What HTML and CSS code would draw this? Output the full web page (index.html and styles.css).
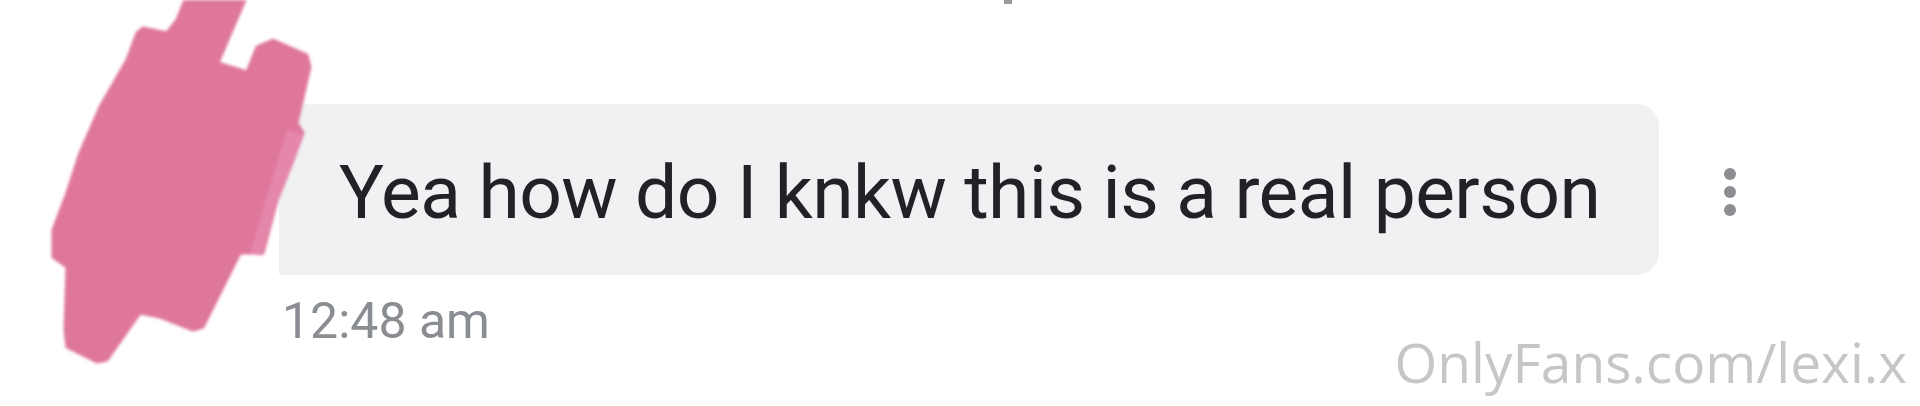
FILE: index.html
```html
<!DOCTYPE html>
<html>
<head>
<meta http-equiv="Content-Type" content="text/html; charset=utf-8">
<title>Message</title>
<link rel="stylesheet" href="styles.css">
</head>
<body>

<div class="chat">
  <span class="chat__cut" aria-hidden="true"></span>

  <svg class="scribble" width="330" height="380" viewBox="0 0 330 380" aria-hidden="true">
    <polygon class="scribble__main" points="185,0 245,0 218,63 247,72 257,47 273,40 307,55 310,67 297,123 303,133 293,160 277,200 263,253 240,253 203,327 193,330 160,317 140,313 107,360 97,362 67,347 65,330 67,267 53,257 53,230 67,193 80,153 100,107 127,60 137,33 143,28 167,33 177,20" />
    <polygon class="scribble__light" points="287,130 303,134 293,160 277,200 262,256 250,254 266,200" />
  </svg>

  <div class="message">
    <div class="message__row">
      <p class="message__bubble">Yea how do I knkw this is a real person</p>
      <button class="message__more" type="button" aria-label="More">
        <i></i><i></i><i></i>
      </button>
    </div>
    <p class="message__time">12:48 am</p>
  </div>

  <p class="watermark">OnlyFans.com/lexi.x</p>
</div>

</body>
</html>
```

FILE: styles.css
```css
/* reset */
body,div,p,button{margin:0;padding:0}
button{border:0;background:none;font:inherit}

/* page */
html,body{background:#fff;font-family:Roboto,"Liberation Sans",sans-serif;}
body{inline-size:1920px;block-size:406px;overflow:hidden;}

.chat{position:relative;inline-size:100%;block-size:100%;padding:104px 0 0 279px;box-sizing:border-box;}

/* message */
.message__row{display:flex;align-items:center;gap:65px;}
.message__bubble{inline-size:1380px;block-size:171px;box-sizing:border-box;padding:6px 0 0 60px;display:flex;align-items:center;background-color:#f0f1f3;border-radius:2px 22px 22px 2px;color:#202225;font-size:75px;line-height:1;letter-spacing:-.6px;}
.message__more{display:flex;flex-direction:column;gap:6px;margin-block-start:5px;}
.message__more i{display:block;inline-size:12px;block-size:12px;border-radius:50%;background-color:#8d8e92;}
.message__time{margin:16px 0 0 3px;color:#8a8d92;font-size:50px;line-height:1.2;}

/* over the picture */
.scribble{position:absolute;left:0;top:0;filter:blur(1.5px);}
.scribble__main{fill:#df779c;stroke:#df779c;stroke-width:3;stroke-linejoin:round;}
.scribble__light{fill:#e78fb0;opacity:.7;}
.chat__cut{position:absolute;left:1004px;top:0;inline-size:8px;block-size:4px;background-color:#9a9a9a;}

.watermark{position:absolute;right:13px;bottom:11px;color:#c6c6c6;font-family:"Open Sans",sans-serif;font-size:55px;line-height:1.2;}
```
